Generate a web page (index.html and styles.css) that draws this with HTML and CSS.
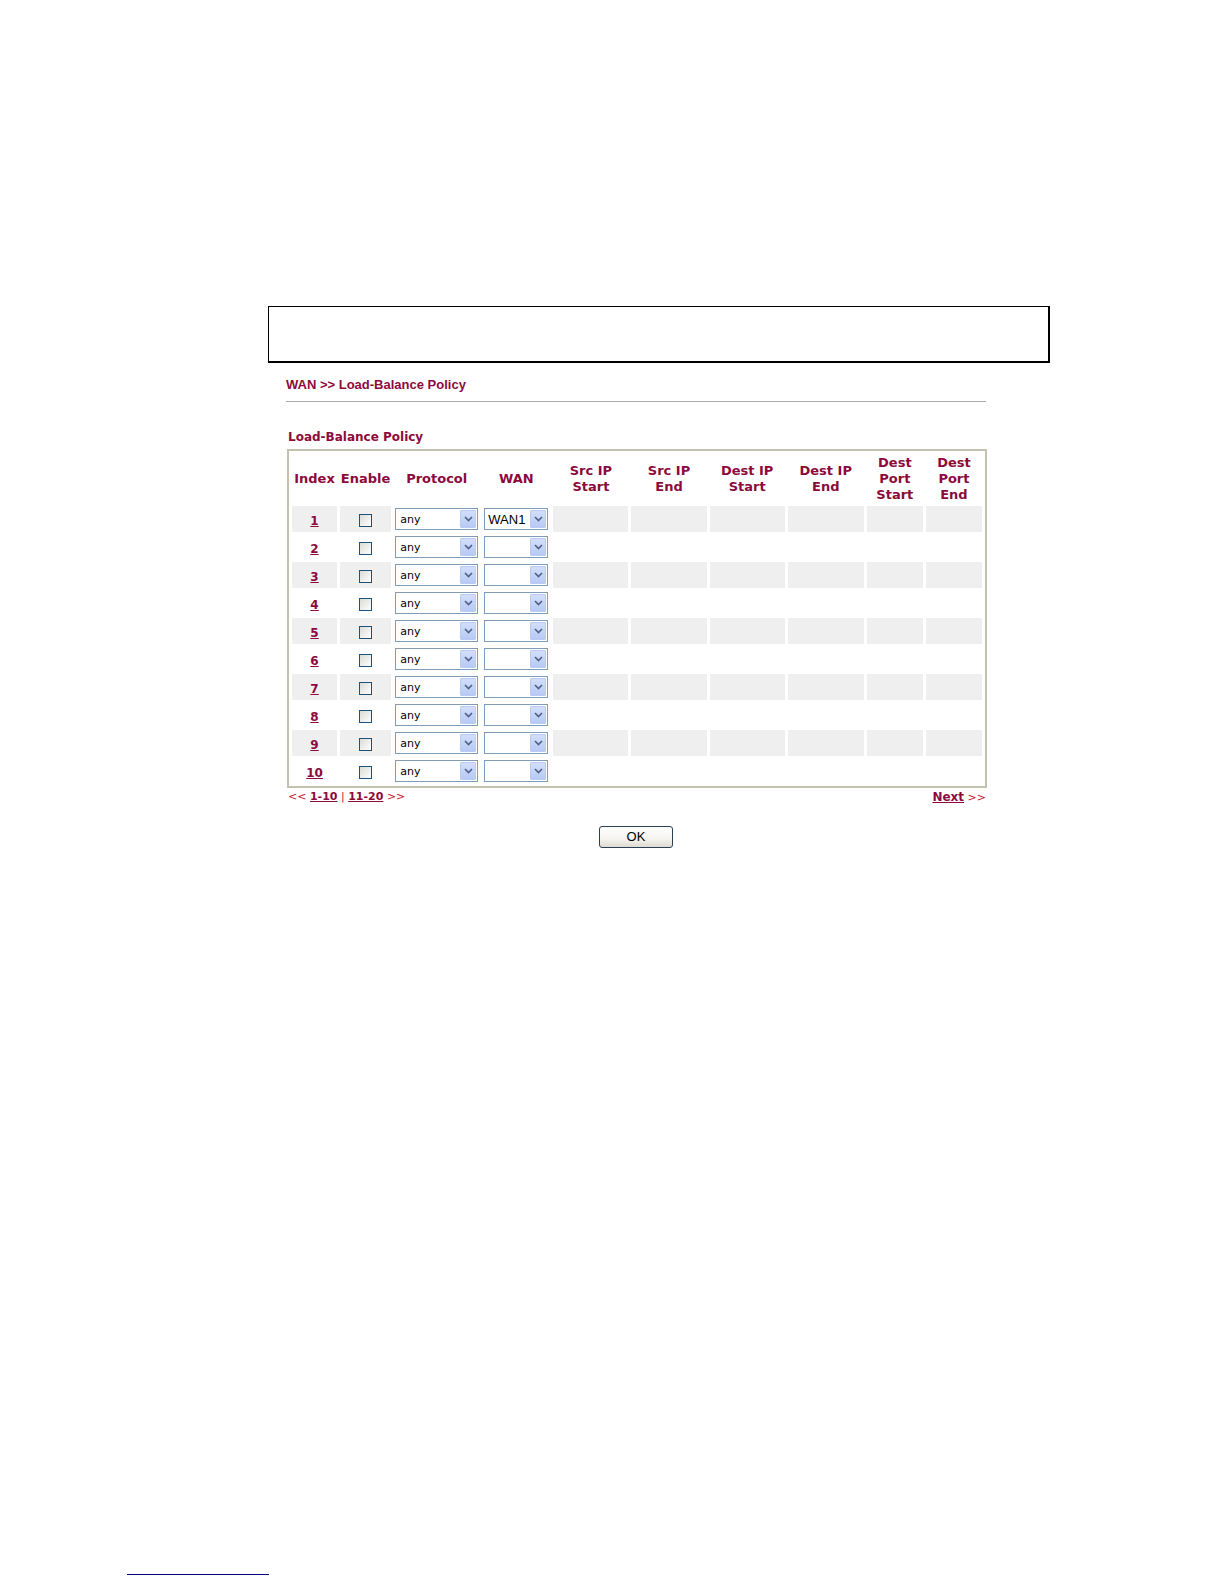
FILE: index.html
```html
<!DOCTYPE html>
<html lang="en">
<head>
<meta charset="utf-8">
<title>WAN &gt;&gt; Load-Balance Policy</title>
<link rel="stylesheet" href="styles.css">
</head>
<body>
<div class="page">
  <div class="topbox"></div>
  <div class="content">
    <div class="crumb">WAN &gt;&gt; Load-Balance Policy</div>
    <div class="rule"></div>
    <div class="section-title">Load-Balance Policy</div>
    <table class="policy">
      <colgroup>
        <col class="c-idx"><col class="c-en"><col class="c-proto"><col class="c-wan">
        <col class="c-ip"><col class="c-ip"><col class="c-ip"><col class="c-ip2">
        <col class="c-port"><col class="c-port">
      </colgroup>
      <thead>
        <tr>
          <th>Index</th><th>Enable</th><th>Protocol</th><th>WAN</th>
          <th>Src IP<br>Start</th><th>Src IP<br>End</th><th>Dest IP<br>Start</th><th>Dest IP<br>End</th>
          <th>Dest<br>Port<br>Start</th><th>Dest<br>Port<br>End</th>
        </tr>
      </thead>
      <tbody>
        <tr class="odd">
          <td class="idx"><a href="#">1</a></td>
          <td class="en"><span class="chk"></span></td>
          <td class="sel"><div class="select proto"><span class="val">any</span><span class="btn"><svg viewBox="0 0 9 6" width="9" height="6"><path d="M1 1 L4.5 4.5 L8 1" fill="none" stroke="#4d6185" stroke-width="1.6"/></svg></span></div></td>
          <td class="sel"><div class="select wan"><span class="val wanval">WAN1</span><span class="btn"><svg viewBox="0 0 9 6" width="9" height="6"><path d="M1 1 L4.5 4.5 L8 1" fill="none" stroke="#4d6185" stroke-width="1.6"/></svg></span></div></td>
          <td class="g"></td><td class="g"></td><td class="g"></td><td class="g"></td><td class="g"></td><td class="g"></td>
        </tr>
        <tr>
          <td class="idx"><a href="#">2</a></td>
          <td class="en"><span class="chk"></span></td>
          <td class="sel"><div class="select proto"><span class="val">any</span><span class="btn"><svg viewBox="0 0 9 6" width="9" height="6"><path d="M1 1 L4.5 4.5 L8 1" fill="none" stroke="#4d6185" stroke-width="1.6"/></svg></span></div></td>
          <td class="sel"><div class="select wan"><span class="val"></span><span class="btn"><svg viewBox="0 0 9 6" width="9" height="6"><path d="M1 1 L4.5 4.5 L8 1" fill="none" stroke="#4d6185" stroke-width="1.6"/></svg></span></div></td>
          <td></td><td></td><td></td><td></td><td></td><td></td>
        </tr>
        <tr class="odd">
          <td class="idx"><a href="#">3</a></td>
          <td class="en"><span class="chk"></span></td>
          <td class="sel"><div class="select proto"><span class="val">any</span><span class="btn"><svg viewBox="0 0 9 6" width="9" height="6"><path d="M1 1 L4.5 4.5 L8 1" fill="none" stroke="#4d6185" stroke-width="1.6"/></svg></span></div></td>
          <td class="sel"><div class="select wan"><span class="val"></span><span class="btn"><svg viewBox="0 0 9 6" width="9" height="6"><path d="M1 1 L4.5 4.5 L8 1" fill="none" stroke="#4d6185" stroke-width="1.6"/></svg></span></div></td>
          <td class="g"></td><td class="g"></td><td class="g"></td><td class="g"></td><td class="g"></td><td class="g"></td>
        </tr>
        <tr>
          <td class="idx"><a href="#">4</a></td>
          <td class="en"><span class="chk"></span></td>
          <td class="sel"><div class="select proto"><span class="val">any</span><span class="btn"><svg viewBox="0 0 9 6" width="9" height="6"><path d="M1 1 L4.5 4.5 L8 1" fill="none" stroke="#4d6185" stroke-width="1.6"/></svg></span></div></td>
          <td class="sel"><div class="select wan"><span class="val"></span><span class="btn"><svg viewBox="0 0 9 6" width="9" height="6"><path d="M1 1 L4.5 4.5 L8 1" fill="none" stroke="#4d6185" stroke-width="1.6"/></svg></span></div></td>
          <td></td><td></td><td></td><td></td><td></td><td></td>
        </tr>
        <tr class="odd">
          <td class="idx"><a href="#">5</a></td>
          <td class="en"><span class="chk"></span></td>
          <td class="sel"><div class="select proto"><span class="val">any</span><span class="btn"><svg viewBox="0 0 9 6" width="9" height="6"><path d="M1 1 L4.5 4.5 L8 1" fill="none" stroke="#4d6185" stroke-width="1.6"/></svg></span></div></td>
          <td class="sel"><div class="select wan"><span class="val"></span><span class="btn"><svg viewBox="0 0 9 6" width="9" height="6"><path d="M1 1 L4.5 4.5 L8 1" fill="none" stroke="#4d6185" stroke-width="1.6"/></svg></span></div></td>
          <td class="g"></td><td class="g"></td><td class="g"></td><td class="g"></td><td class="g"></td><td class="g"></td>
        </tr>
        <tr>
          <td class="idx"><a href="#">6</a></td>
          <td class="en"><span class="chk"></span></td>
          <td class="sel"><div class="select proto"><span class="val">any</span><span class="btn"><svg viewBox="0 0 9 6" width="9" height="6"><path d="M1 1 L4.5 4.5 L8 1" fill="none" stroke="#4d6185" stroke-width="1.6"/></svg></span></div></td>
          <td class="sel"><div class="select wan"><span class="val"></span><span class="btn"><svg viewBox="0 0 9 6" width="9" height="6"><path d="M1 1 L4.5 4.5 L8 1" fill="none" stroke="#4d6185" stroke-width="1.6"/></svg></span></div></td>
          <td></td><td></td><td></td><td></td><td></td><td></td>
        </tr>
        <tr class="odd">
          <td class="idx"><a href="#">7</a></td>
          <td class="en"><span class="chk"></span></td>
          <td class="sel"><div class="select proto"><span class="val">any</span><span class="btn"><svg viewBox="0 0 9 6" width="9" height="6"><path d="M1 1 L4.5 4.5 L8 1" fill="none" stroke="#4d6185" stroke-width="1.6"/></svg></span></div></td>
          <td class="sel"><div class="select wan"><span class="val"></span><span class="btn"><svg viewBox="0 0 9 6" width="9" height="6"><path d="M1 1 L4.5 4.5 L8 1" fill="none" stroke="#4d6185" stroke-width="1.6"/></svg></span></div></td>
          <td class="g"></td><td class="g"></td><td class="g"></td><td class="g"></td><td class="g"></td><td class="g"></td>
        </tr>
        <tr>
          <td class="idx"><a href="#">8</a></td>
          <td class="en"><span class="chk"></span></td>
          <td class="sel"><div class="select proto"><span class="val">any</span><span class="btn"><svg viewBox="0 0 9 6" width="9" height="6"><path d="M1 1 L4.5 4.5 L8 1" fill="none" stroke="#4d6185" stroke-width="1.6"/></svg></span></div></td>
          <td class="sel"><div class="select wan"><span class="val"></span><span class="btn"><svg viewBox="0 0 9 6" width="9" height="6"><path d="M1 1 L4.5 4.5 L8 1" fill="none" stroke="#4d6185" stroke-width="1.6"/></svg></span></div></td>
          <td></td><td></td><td></td><td></td><td></td><td></td>
        </tr>
        <tr class="odd">
          <td class="idx"><a href="#">9</a></td>
          <td class="en"><span class="chk"></span></td>
          <td class="sel"><div class="select proto"><span class="val">any</span><span class="btn"><svg viewBox="0 0 9 6" width="9" height="6"><path d="M1 1 L4.5 4.5 L8 1" fill="none" stroke="#4d6185" stroke-width="1.6"/></svg></span></div></td>
          <td class="sel"><div class="select wan"><span class="val"></span><span class="btn"><svg viewBox="0 0 9 6" width="9" height="6"><path d="M1 1 L4.5 4.5 L8 1" fill="none" stroke="#4d6185" stroke-width="1.6"/></svg></span></div></td>
          <td class="g"></td><td class="g"></td><td class="g"></td><td class="g"></td><td class="g"></td><td class="g"></td>
        </tr>
        <tr>
          <td class="idx"><a href="#">10</a></td>
          <td class="en"><span class="chk"></span></td>
          <td class="sel"><div class="select proto"><span class="val">any</span><span class="btn"><svg viewBox="0 0 9 6" width="9" height="6"><path d="M1 1 L4.5 4.5 L8 1" fill="none" stroke="#4d6185" stroke-width="1.6"/></svg></span></div></td>
          <td class="sel"><div class="select wan"><span class="val"></span><span class="btn"><svg viewBox="0 0 9 6" width="9" height="6"><path d="M1 1 L4.5 4.5 L8 1" fill="none" stroke="#4d6185" stroke-width="1.6"/></svg></span></div></td>
          <td></td><td></td><td></td><td></td><td></td><td></td>
        </tr>
      </tbody>
    </table>
    <div class="pager">
      <div class="pages"><span class="arr">&lt;&lt;</span> <a href="#">1-10</a> <span class="arr">|</span> <a href="#">11-20</a> <span class="arr">&gt;&gt;</span></div>
      <div class="next"><a href="#">Next</a> <span class="arr">&gt;&gt;</span></div>
    </div>
    <div class="actions"><button class="ok" type="button">OK</button></div>
  </div>
  <div class="footnote-rule"></div>
</div>
</body>
</html>
```

FILE: styles.css
```css
html, body {
  margin: 0;
  padding: 0;
  background: #ffffff;
}

.page {
  padding-top: 306px;
  font-family: "DejaVu Sans", Verdana, sans-serif;
}

.topbox {
  margin-left: 268px;
  width: 782px;
  height: 57px;
  box-sizing: border-box;
  border-top: 1px solid #000;
  border-left: 1px solid #000;
  border-right: 2px solid #000;
  border-bottom: 2px solid #000;
}

.content {
  margin-left: 286px;
  width: 700px;
}

.crumb {
  margin-top: 14px;
  height: 16px;
  line-height: 16px;
  font-family: "Liberation Sans Narrow", "Liberation Sans", Arial, sans-serif;
  font-weight: bold;
  font-size: 13px;
  color: #8c0a3c;
}

.rule {
  margin-top: 8px;
  height: 1px;
  background: #a8a8a8;
}

.section-title {
  margin-top: 28px;
  margin-left: 2px;
  height: 14px;
  line-height: 14px;
  font-weight: bold;
  font-size: 12px;
  color: #8c0a3c;
}

.policy {
  margin-top: 5px;
  margin-left: 1px;
  width: 700px;
  table-layout: fixed;
  border-collapse: separate;
  border-spacing: 3px 2px;
  border: 2px solid #c2c2ae;
}

.c-idx { width: 45px; }
.c-en { width: 51px; }
.c-proto { width: 85px; }
.c-wan { width: 68px; }
.c-ip { width: 75px; }
.c-ip2 { width: 76px; }
.c-port { width: 56px; }

.policy th {
  height: 51px;
  padding: 0;
  font-size: 13px;
  font-weight: bold;
  line-height: 16px;
  color: #8c0a3c;
  text-align: center;
  vertical-align: middle;
  white-space: nowrap;
}

.policy td {
  height: 26px;
  padding: 0;
  text-align: center;
  vertical-align: middle;
}

.policy tr.odd td.idx,
.policy tr.odd td.en,
.policy td.g {
  background: #efefef;
}

.idx a {
  font-size: 12px;
  font-weight: bold;
  color: #8c0a3c;
  text-decoration: underline;
}

.chk {
  display: inline-block;
  width: 13px;
  height: 13px;
  box-sizing: border-box;
  border: 1px solid #1c5180;
  background: linear-gradient(135deg, #dcdcd7 0%, #f0f0ec 60%, #ffffff 100%);
  vertical-align: middle;
}

.select {
  display: flex;
  align-items: center;
  height: 22px;
  box-sizing: border-box;
  border: 1px solid #7f9db9;
  background: #fff;
  margin: 0 auto;
  text-align: left;
}

.select.proto { width: 83px; }
.select.wan { width: 64px; }

.select .val {
  flex: 1;
  padding-left: 4px;
  font-family: "DejaVu Sans", Verdana, sans-serif;
  font-size: 11px;
  color: #000;
}

.select .wanval {
  font-family: "Liberation Sans", Arial, sans-serif;
  font-size: 13px;
  padding-left: 3px;
}

.select .btn {
  display: flex;
  align-items: center;
  justify-content: center;
  width: 16px;
  height: 18px;
  margin-right: 1px;
  box-sizing: border-box;
  border: 1px solid #b9cbf3;
  border-radius: 1px;
  background: linear-gradient(#d2defb, #b6caf5);
}

.pager {
  margin-top: 2px;
  margin-left: 2px;
  height: 14px;
  line-height: 14px;
  display: flex;
  justify-content: space-between;
  font-size: 11px;
}

.pager a {
  font-weight: bold;
  color: #8c0a3c;
  text-decoration: underline;
}

.pager .next a {
  font-size: 12px;
}

.pager .arr {
  color: #c8102e;
}

.actions {
  margin-top: 22px;
  margin-left: 313px;
}

.ok {
  width: 74px;
  height: 22px;
  padding: 0;
  box-sizing: border-box;
  border: 1px solid #2b3f55;
  border-radius: 3px;
  background: linear-gradient(#ffffff 0%, #f4f3ee 60%, #dedbd2 100%);
  font-family: "Liberation Sans", Arial, sans-serif;
  font-size: 13px;
  color: #000;
  line-height: 20px;
}

.footnote-rule {
  margin-top: 726px;
  margin-left: 127px;
  width: 142px;
  height: 1px;
  background: #000080;
}
```
